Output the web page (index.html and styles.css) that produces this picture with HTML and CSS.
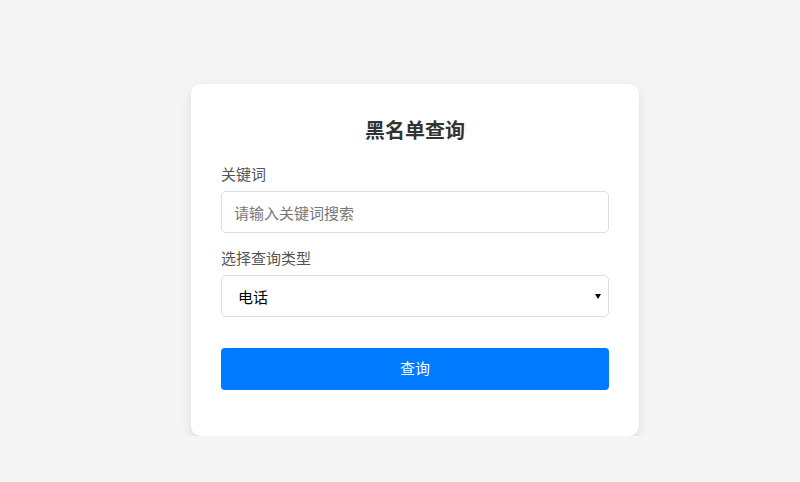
FILE: index.html
```html
<!DOCTYPE html>
<html lang="zh-CN">
<head>
<meta charset="utf-8">
<title>黑名单查询</title>
<link rel="stylesheet" href="styles.css">
</head>
<body>
<div class="page">
  <div class="card">
    <h2 class="title">黑名单查询</h2>
    <form class="form">
      <div class="field">
        <label class="label" for="kw">关键词</label>
        <input class="input" id="kw" type="text" placeholder="请输入关键词搜索">
      </div>
      <div class="field">
        <label class="label" for="type">选择查询类型</label>
        <div class="select-wrap">
          <select class="input select" id="type">
            <option>电话</option>
            <option>姓名</option>
          </select>
          <span class="caret"></span>
        </div>
      </div>
      <button class="btn" type="button">查询</button>
    </form>
  </div>
</div>
</body>
</html>
```

FILE: styles.css
```css
html, body {
  margin: 0;
  padding: 0;
  background: #f5f5f5;
  font-family: "Noto Sans CJK SC", "Noto Sans", sans-serif;
}
.page {
  padding: 84px 0 0 191px;
}
.card {
  width: 388px;
  padding: 30px 30px 46px;
  background: #fff;
  border-radius: 10px;
  box-shadow: 0 4px 12px rgba(0, 0, 0, 0.1);
}
.title {
  margin: 0 0 17px;
  font-size: 20px;
  line-height: 32px;
  font-weight: 700;
  color: #333;
  text-align: center;
}
.form {
  display: flex;
  flex-direction: column;
}
.field {
  display: flex;
  flex-direction: column;
  margin-bottom: 14px;
}
.label {
  font-size: 15px;
  line-height: 22px;
  color: #555;
  margin-bottom: 6px;
}
.input {
  box-sizing: border-box;
  height: 42px;
  width: 100%;
  padding: 0 12px;
  border: 1px solid #ddd;
  border-radius: 5px;
  font-family: inherit;
  font-size: 15px;
  color: #000;
  background: #fff;
  outline: none;
}
.input::placeholder {
  color: #777;
}
.select-wrap {
  position: relative;
}
.select {
  appearance: none;
  -webkit-appearance: none;
  padding-left: 16px;
  display: block;
}
.caret {
  position: absolute;
  right: 8px;
  top: 19px;
  width: 0;
  height: 0;
  border-left: 3px solid transparent;
  border-right: 3px solid transparent;
  border-top: 5px solid #000;
  pointer-events: none;
}
.btn {
  margin-top: 17px;
  height: 42px;
  padding: 0 0 3px;
  border: none;
  border-radius: 4px;
  background: #007bff;
  color: #fff;
  font-family: inherit;
  font-size: 15px;
  cursor: pointer;
}
```
